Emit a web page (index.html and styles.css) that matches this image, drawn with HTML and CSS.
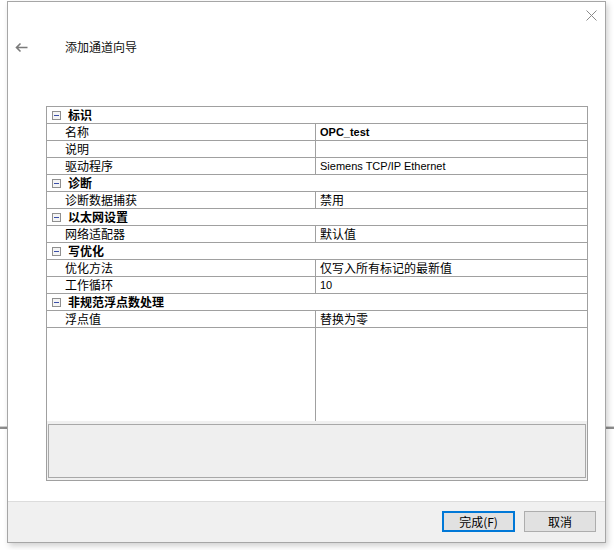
FILE: index.html
```html
<!DOCTYPE html>
<html lang="zh-CN">
<head>
<meta charset="utf-8">
<title>添加通道向导</title>
<link rel="stylesheet" href="styles.css">
</head>
<body>
<div class="dialog">
  <div class="titlebar">
    <svg class="close" width="11" height="11" viewBox="0 0 11 11"><path d="M0.5 0.5 L10.5 10.5 M10.5 0.5 L0.5 10.5" stroke="#8a8a8a" stroke-width="1" fill="none"/></svg>
  </div>
  <div class="header">
    <svg class="back" width="13" height="11" viewBox="0 0 13 11"><path d="M12.5 5.5 H1.5 M5.5 1.5 L1.5 5.5 L5.5 9.5" stroke="#7a7a7a" stroke-width="1.6" fill="none"/></svg>
    <span class="title">添加通道向导</span>
  </div>
  <div class="grid">
    <div class="rows">
      <div class="cat"><svg class="tog" width="9" height="9" viewBox="0 0 9 9"><rect x="0.5" y="0.5" width="8" height="8" fill="#f4f4f4" stroke="#8f8f8f"/><path d="M2 4.5 H7" stroke="#3b4fa8" stroke-width="1"/></svg><span>标识</span></div>
      <div class="prop"><span class="name">名称</span><span class="val bold">OPC_test</span></div>
      <div class="prop"><span class="name">说明</span><span class="val"></span></div>
      <div class="prop"><span class="name">驱动程序</span><span class="val">Siemens TCP/IP Ethernet</span></div>
      <div class="cat"><svg class="tog" width="9" height="9" viewBox="0 0 9 9"><rect x="0.5" y="0.5" width="8" height="8" fill="#f4f4f4" stroke="#8f8f8f"/><path d="M2 4.5 H7" stroke="#3b4fa8" stroke-width="1"/></svg><span>诊断</span></div>
      <div class="prop"><span class="name">诊断数据捕获</span><span class="val cjk">禁用</span></div>
      <div class="cat"><svg class="tog" width="9" height="9" viewBox="0 0 9 9"><rect x="0.5" y="0.5" width="8" height="8" fill="#f4f4f4" stroke="#8f8f8f"/><path d="M2 4.5 H7" stroke="#3b4fa8" stroke-width="1"/></svg><span>以太网设置</span></div>
      <div class="prop"><span class="name">网络适配器</span><span class="val cjk">默认值</span></div>
      <div class="cat"><svg class="tog" width="9" height="9" viewBox="0 0 9 9"><rect x="0.5" y="0.5" width="8" height="8" fill="#f4f4f4" stroke="#8f8f8f"/><path d="M2 4.5 H7" stroke="#3b4fa8" stroke-width="1"/></svg><span>写优化</span></div>
      <div class="prop"><span class="name">优化方法</span><span class="val cjk">仅写入所有标记的最新值</span></div>
      <div class="prop"><span class="name">工作循环</span><span class="val">10</span></div>
      <div class="cat"><svg class="tog" width="9" height="9" viewBox="0 0 9 9"><rect x="0.5" y="0.5" width="8" height="8" fill="#f4f4f4" stroke="#8f8f8f"/><path d="M2 4.5 H7" stroke="#3b4fa8" stroke-width="1"/></svg><span>非规范浮点数处理</span></div>
      <div class="prop"><span class="name">浮点值</span><span class="val cjk">替换为零</span></div>
      <div class="filler"><div class="filler-left"></div><div></div></div>
    </div>
    <div class="desc"><div class="desc-box"></div></div>
  </div>
  <div class="footer">
    <button class="btn primary">完成(F)</button>
    <button class="btn">取消</button>
  </div>
</div>
</body>
</html>
```
FILE: styles.css
```css
html, body {
  margin: 0;
  padding: 0;
}
body {
  width: 614px;
  height: 550px;
  overflow: hidden;
  background:
    linear-gradient(to bottom,
      #ffffff 0, #ffffff 426px,
      #cfcfcf 426px, #cfcfcf 427px,
      #8c8c8c 427px, #8c8c8c 429px,
      #ffffff 429px, #ffffff 100%);
  font-family: "Noto Sans CJK SC", "Liberation Sans", sans-serif;
  color: #000;
}
.dialog {
  box-sizing: border-box;
  margin: 1px 0 0 7px;
  width: 599px;
  height: 542px;
  border: 1px solid #a6a6a6;
  background: #fff;
  box-shadow: 2px 3px 6px rgba(0, 0, 0, 0.18);
  display: flex;
  flex-direction: column;
}
.titlebar {
  height: 26px;
  display: flex;
  justify-content: flex-end;
  align-items: flex-start;
  padding: 8px 8px 0 0;
  box-sizing: border-box;
}
.close {
  display: block;
}
.header {
  margin-top: 10px;
  height: 18px;
  display: flex;
  align-items: center;
  padding-left: 7px;
}
.back {
  display: block;
}
.title {
  margin-left: 37px;
  font-size: 12px;
  line-height: 18px;
  color: #111;
}
.grid {
  box-sizing: border-box;
  margin: 50px 0 0 38px;
  width: 542px;
  height: 375px;
  border: 1px solid #a0a0a0;
  display: flex;
  flex-direction: column;
}
.rows {
  flex: 1;
  display: flex;
  flex-direction: column;
}
.cat, .prop {
  box-sizing: border-box;
  height: 17px;
  border-bottom: 1px solid #a0a0a0;
  display: flex;
  align-items: center;
  font-size: 12px;
  line-height: 16px;
}
.cat {
  padding-left: 5px;
  font-weight: bold;
}
.tog {
  display: block;
  margin-right: 7px;
}
.prop {
  display: grid;
  grid-template-columns: 269px 1fr;
}
.name {
  padding-left: 18px;
  height: 16px;
  border-right: 1px solid #a0a0a0;
  white-space: nowrap;
}
.val {
  padding-left: 4px;
  height: 16px;
  white-space: nowrap;
  font-family: "Liberation Sans", "Noto Sans CJK SC", sans-serif;
  font-size: 11px;
}
.val.cjk {
  font-family: "Noto Sans CJK SC", sans-serif;
  font-size: 12px;
}
.bold {
  font-weight: bold;
}
.filler {
  flex: 1;
  display: grid;
  grid-template-columns: 269px 1fr;
}
.filler-left {
  border-right: 1px solid #a0a0a0;
}
.desc {
  background: #f0f0f0;
  padding: 3px 1px 2px 1px;
}
.desc-box {
  box-sizing: border-box;
  height: 54px;
  border: 1px solid #a8a8a8;
  background: #efefef;
}
.footer {
  margin-top: auto;
  box-sizing: border-box;
  height: 41px;
  background: #f0f0f0;
  border-top: 1px solid #dcdcdc;
  display: flex;
  justify-content: flex-end;
  align-items: flex-start;
  padding: 9px 9px 0 0;
  gap: 9px;
}
.btn {
  box-sizing: border-box;
  height: 21px;
  width: 72px;
  margin: 0;
  padding: 0;
  background: #e1e1e1;
  border: 1px solid #adadad;
  font-family: "Noto Sans CJK SC", sans-serif;
  font-size: 12px;
  line-height: 18px;
  color: #000;
}
.btn.primary {
  width: 73px;
  border: 2px solid #0078d7;
}
```
